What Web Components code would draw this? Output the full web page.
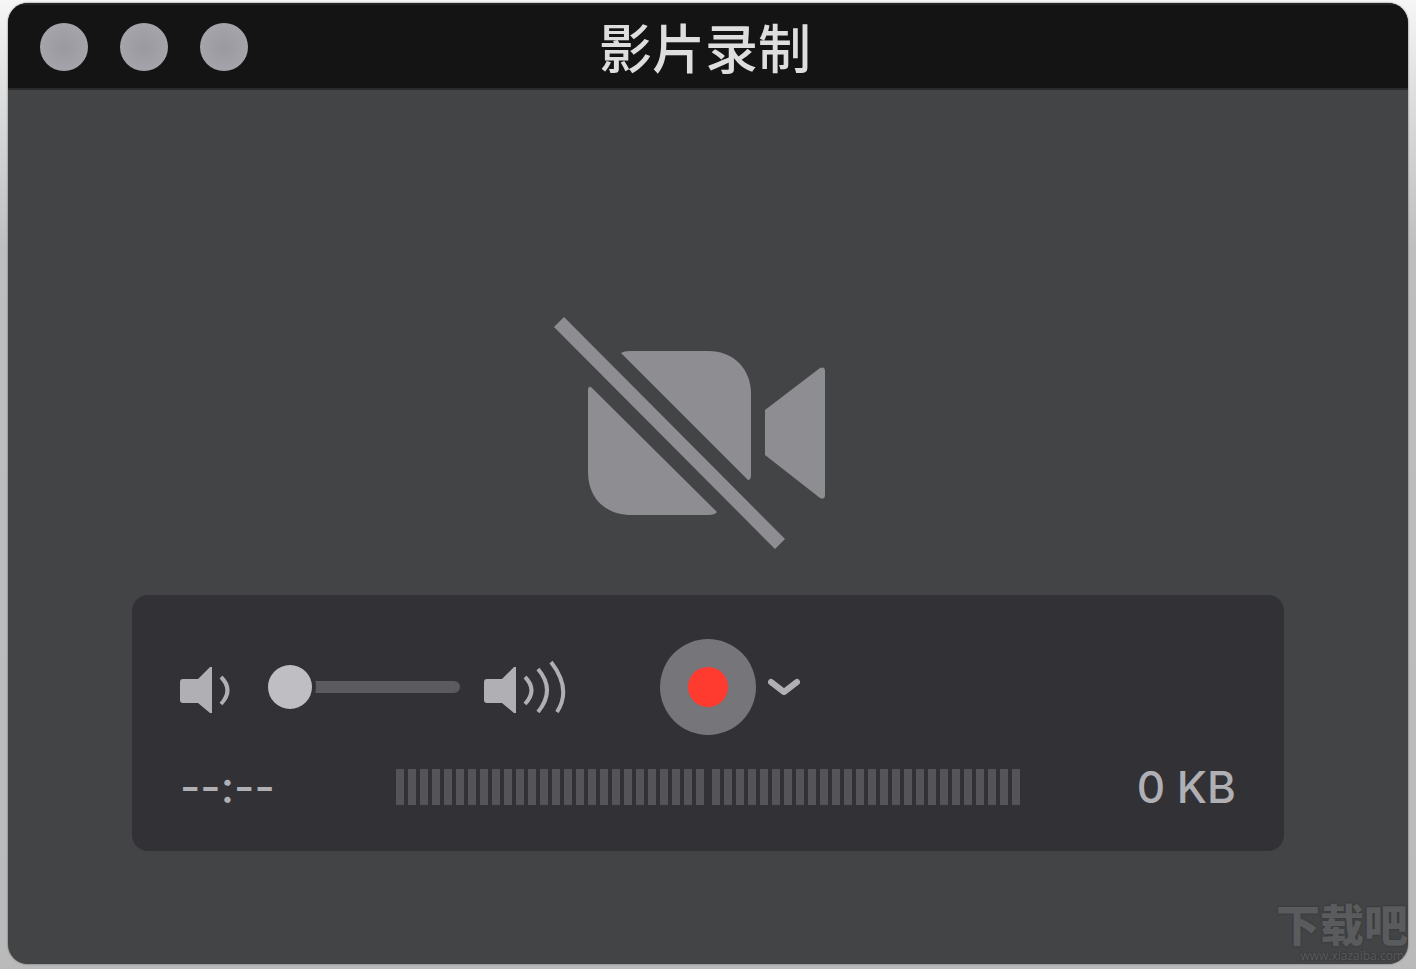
<!DOCTYPE html>
<html lang="zh-CN">
<head>
<meta charset="utf-8">
<meta name="viewport" content="width=device-width, initial-scale=1">
<title>影片录制</title>
<style>
  body {
    margin: 0;
    min-height: 100vh;
    display: flex;
    box-sizing: border-box;
    padding: 3px 8px 5px;
    background: linear-gradient(#f6f6f6, #e2e2e2 8%, #bebebe 26%, #bababa);
    font-family: Inter, "Noto Sans CJK SC", sans-serif;
  }
</style>
</head>
<body>
<recorder-window heading="影片录制">
  <camera-off></camera-off>
  <control-panel>
    <volume-control slot="volume"></volume-control>
    <record-control slot="record"></record-control>
    <span slot="time">--:--</span>
    <level-meter slot="meter"></level-meter>
    <span slot="size">0 KB</span>
  </control-panel>
  <site-mark slot="mark" name="下载吧">www.xiazaiba.com</site-mark>
</recorder-window>

<script>
class RecorderWindow extends HTMLElement {
  connectedCallback() {
    this.attachShadow({ mode: "open" }).innerHTML = `
    <style>
      :host {
        position: relative;
        flex: 1;
        display: flex;
        flex-direction: column;
        overflow: hidden;
        border-radius: 20px;
        background: #434446;
        box-shadow: 0 0 2px #555;
      }
      header {
        display: grid;
        grid-template-columns: 1fr auto 1fr;
        align-items: center;
        height: 87px;
        padding: 1px 32px 0;
        box-sizing: border-box;
        background: #141414;
        border-top: 2px solid #242424;
        border-bottom: 2px solid #2b2b2c;
      }
      .lights {
        display: flex;
        gap: 32px;
      }
      .lights button {
        width: 48px;
        height: 48px;
        padding: 0;
        border: none;
        border-radius: 50%;
        background: radial-gradient(#9a999f, #a5a4aa 70%);
      }
      h1 {
        margin: 0;
        padding: 6px 6px 0 0;
        font-size: 53px;
        line-height: 60px;
        font-weight: 500;
        color: #dedede;
      }
      main {
        flex: 1;
        display: flex;
        flex-direction: column;
        justify-content: flex-end;
        align-items: center;
        gap: 35px;
        padding: 0 124px 113px;
      }
    </style>
    <header>
      <div class="lights">
        <button aria-label="关闭"></button>
        <button aria-label="最小化"></button>
        <button aria-label="缩放"></button>
      </div>
      <h1>${this.getAttribute("heading")}</h1>
    </header>
    <main><slot></slot></main>
    <slot name="mark"></slot>
  `;
  }
}
customElements.define("recorder-window", RecorderWindow);

class CameraOff extends HTMLElement {
  connectedCallback() {
    this.attachShadow({ mode: "open" }).innerHTML = `
    <style>
      :host { display: block; }
      svg { display: block; fill: #8e8d92; }
    </style>
    <svg width="320" height="260" viewBox="0 0 320 260" aria-hidden="true">
      <path d="M16 17L237 239L227 249L6 27Z"/>
      <path d="M73 53Q76 51 82 51H160C186 51 203 69 203 94V175Q203 180 200 180Z"/>
      <path d="M40 89Q41 85 44 88L169 212Q167 215 160 215H84C56 215 40 197 40 172Z"/>
      <path d="M217 110L272 68Q277 66 277 71V195Q277 200 272 198L217 155Z"/>
    </svg>
  `;
  }
}
customElements.define("camera-off", CameraOff);

class ControlPanel extends HTMLElement {
  connectedCallback() {
    this.attachShadow({ mode: "open" }).innerHTML = `
    <style>
      :host {
        display: grid;
        grid-template-columns: 1fr auto 1fr;
        row-gap: 34px;
        align-items: center;
        align-self: stretch;
        padding: 44px 48px 46px;
        border-radius: 16px;
        background: #323136;
        color: #b0afb4;
        font-size: 44px;
        font-weight: 500;
        line-height: 36px;
      }
      .top {
        grid-column: 1 / -1;
        display: grid;
        grid-template-columns: 1fr 96px 1fr;
        align-items: center;
      }
      .size { text-align: right; }
    </style>
    <div class="top">
      <slot name="volume"></slot>
      <slot name="record"></slot>
    </div>
    <div><slot name="time"></slot></div>
    <slot name="meter"></slot>
    <div class="size"><slot name="size"></slot></div>
  `;
  }
}
customElements.define("control-panel", ControlPanel);

class VolumeControl extends HTMLElement {
  connectedCallback() {
    this.attachShadow({ mode: "open" }).innerHTML = `
    <style>
      :host {
        display: flex;
        align-items: center;
        gap: 24px;
      }
      svg {
        flex: none;
        fill: #b0afb4;
      }
      .wave {
        fill: none;
        stroke: #b0afb4;
        stroke-width: 4;
      }
      input {
        appearance: none;
        width: 192px;
        height: 44px;
        margin: 0;
        background: none;
      }
      input::-webkit-slider-runnable-track {
        height: 12px;
        border-radius: 6px;
        background: #5b5a5f;
      }
      input::-webkit-slider-thumb {
        appearance: none;
        width: 44px;
        height: 44px;
        margin-top: -16px;
        border-radius: 50%;
        background: #bfbec3;
        box-shadow: 0 0 0 4px #323136;
      }
    </style>
    <svg width="64" height="52" viewBox="0 0 64 52" aria-hidden="true">
      <path d="M3 18H18L30 6H32V52H30L18 42H3Q0 42 0 39V21Q0 18 3 18Z"/>
      <path class="wave" d="M41 16Q54 29 41 43"/>
    </svg>
    <input type="range" min="0" max="100" value="0" aria-label="音量">
    <svg width="84" height="52" viewBox="0 0 84 52" aria-hidden="true">
      <path d="M3 18H18L30 6H32V52H30L18 42H3Q0 42 0 39V21Q0 18 3 18Z"/>
      <path class="wave" d="M41 16Q54 29 41 43M54 8Q72 29 54 51M67 1Q88 28 73 51"/>
    </svg>
  `;
  }
}
customElements.define("volume-control", VolumeControl);

class RecordControl extends HTMLElement {
  connectedCallback() {
    this.attachShadow({ mode: "open" }).innerHTML = `
    <style>
      :host {
        display: flex;
        align-items: center;
        gap: 12px;
      }
      button {
        flex: none;
        padding: 0;
        border: none;
        background: none;
      }
      .record {
        display: grid;
        place-items: center;
        width: 96px;
        height: 96px;
        border-radius: 50%;
        background: #767579;
      }
      .record::before {
        content: "";
        width: 40px;
        height: 40px;
        border-radius: 50%;
        background: #ff3b30;
      }
      svg {
        display: block;
        fill: none;
        stroke: #b0afb4;
        stroke-width: 6;
        stroke-linecap: round;
        stroke-linejoin: round;
      }
    </style>
    <button class="record" aria-label="录制"></button>
    <button aria-label="选项">
      <svg width="32" height="20" viewBox="0 0 32 20"><path d="M3 5L16 15L29 5"/></svg>
    </button>
  `;
  }
}
customElements.define("record-control", RecordControl);

class LevelMeter extends HTMLElement {
  connectedCallback() {
    // left and right channel, 26 bars each
    const channel = `<div>${"<i></i>".repeat(26)}</div>`;
    this.attachShadow({ mode: "open" }).innerHTML = `
    <style>
      :host {
        display: flex;
        gap: 8px;
      }
      div {
        display: flex;
        gap: 4px;
      }
      i {
        width: 8px;
        height: 36px;
        background: #555459;
      }
    </style>
    ${channel}${channel}
  `;
  }
}
customElements.define("level-meter", LevelMeter);

class SiteMark extends HTMLElement {
  connectedCallback() {
    this.attachShadow({ mode: "open" }).innerHTML = `
    <style>
      /* lies over the window's corner */
      :host {
        position: absolute;
        right: 0;
        bottom: 0;
        display: flex;
        flex-direction: column;
        align-items: flex-end;
        color: #5a5b5d;
        text-shadow: 0 0 2px #2c2d2f;
      }
      b {
        font-size: 44px;
        line-height: 44px;
        font-weight: 900;
      }
      small {
        padding-right: 4px;
        font: 12px/16px "Open Sans", sans-serif;
      }
    </style>
    <b>${this.getAttribute("name")}</b>
    <small><slot></slot></small>
  `;
  }
}
customElements.define("site-mark", SiteMark);
</script>
</body>
</html>
